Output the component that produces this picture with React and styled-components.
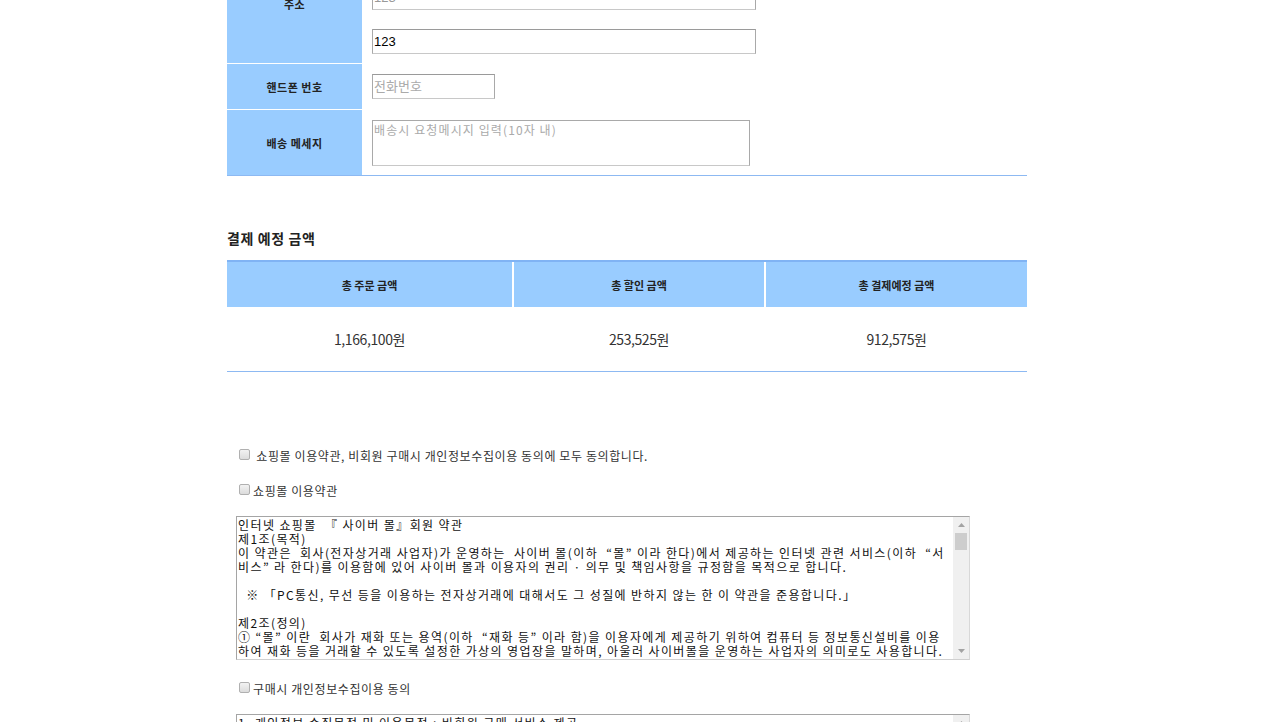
import styled, { createGlobalStyle } from "styled-components";

const GlobalStyle = createGlobalStyle`
  body {
    margin: 0;
    background: #fff;
    font-family: "Noto Sans CJK KR", "Noto Sans", sans-serif;
    color: #222;
  }
`;

const terms1 = [
  "인터넷 쇼핑몰  『 사이버 몰』회원 약관",
  "제1조(목적)",
  "이 약관은  회사(전자상거래 사업자)가 운영하는  사이버 몰(이하  “몰” 이라 한다)에서 제공하는 인터넷 관련 서비스(이하  “서",
  "비스” 라 한다)를 이용함에 있어 사이버 몰과 이용자의 권리 · 의무 및 책임사항을 규정함을 목적으로 합니다.",
  "",
  "  ※ 「PC통신, 무선 등을 이용하는 전자상거래에 대해서도 그 성질에 반하지 않는 한 이 약관을 준용합니다.」",
  "",
  "제2조(정의)",
  "① “몰” 이란  회사가 재화 또는 용역(이하  “재화 등” 이라 함)을 이용자에게 제공하기 위하여 컴퓨터 등 정보통신설비를 이용",
  "하여 재화 등을 거래할 수 있도록 설정한 가상의 영업장을 말하며, 아울러 사이버몰을 운영하는 사업자의 의미로도 사용합니다.",
  "② “이용자” 란 “몰” 에 접속하여 이 약관에 따라 “몰” 이 제공하는 서비스를 받는 회원 및 비회원을 말합니다.",
  "③ ‘회원’ 이라 함은 “몰” 에 회원등록을 한 자로서, 계속적으로 “몰” 이 제공하는 서비스를 이용할 수 있는 자를 말합니다.",
  "④ ‘비회원’ 이라 함은 회원에 가입하지 않고 “몰” 이 제공하는 서비스를 이용하는 자를 말합니다.",
  "",
  "제3조 (약관 등의 명시와 설명 및 개정)",
  "① “몰” 은 이 약관의 내용과 상호 및 대표자 성명, 영업소 소재지 주소(소비자의 불만을 처리할 수 있는 곳의 주소를 포함),",
  "전화번호 · 모사전송번호 · 전자우편주소, 사업자등록번호, 통신판매업 신고번호, 개인정보관리책임자등을 이용자가 쉽게 알 수",
  "있도록 사이버몰의 초기 서비스화면(전면)에 게시합니다.",
  "② “몰” 은 이용자가 약관에 동의하기에 앞서 약관에 정하여져 있는 내용 중 청약철회 · 배송책임 · 환불조건 등과 같은 중요한",
  "내용을 이용자가 이해할 수 있도록 별도의 연결화면 또는 팝업화면 등을 제공하여 이용자의 확인을 구하여야 합니다.",
].join("\n");

const terms2 = [
  "1. 개인정보 수집목적 및 이용목적 : 비회원 구매 서비스 제공",
  "2. 수집하는 개인정보 항목 : 성명, 주소, 전화번호, 이메일, 결제 정보, 비회원 결제 비밀번호",
  "3. 개인정보의 보유기간 및 이용기간",
  "원칙적으로, 개인정보 수집 및 이용목적이 달성된 후에는 해당 정보를 지체 없이 파기합니다.",
  "단, 다음의 정보에 대해서는 아래의 이유로 명시한 기간 동안 보존합니다.",
  "가. 회사 내부 방침에 의한 정보 보유 사유",
  "  - 부정거래 방지 및 쇼핑몰 운영방침에 따른 보관 : 5년",
  "나. 관련 법령에 의한 정보보유 사유",
  "  - 계약 또는 청약철회 등에 관한 기록 : 5년",
  "  - 대금 결제 및 재화 등의 공급에 관한 기록 : 5년",
].join("\n");

function ArrowIcon({ down }) {
  return (
    <svg width="7" height="4" viewBox="0 0 7 4">
      <path d={down ? "M0 0 H7 L3.5 4 Z" : "M0 4 H7 L3.5 0 Z"} fill="#a3a3a3" />
    </svg>
  );
}

function Terms({ text }) {
  return (
    <TermsFrame>
      <TermsText readOnly value={text} />
      <ScrollBar>
        <ScrollButton>
          <ArrowIcon />
        </ScrollButton>
        <Thumb />
        <ScrollFill />
        <ScrollButton>
          <ArrowIcon down />
        </ScrollButton>
      </ScrollBar>
    </TermsFrame>
  );
}

function App() {
  return (
    <Page>
      <GlobalStyle />
      <AddressTable>
        <Label>주소</Label>
        <AddressCell>
          <ZipRow>
            <TextInput $width="120px" defaultValue="12345" />
            <ZipButton type="button">우편번호</ZipButton>
          </ZipRow>
          <TextInput $width="384px" defaultValue="123" $muted />
          <TextInput $width="384px" defaultValue="123" />
        </AddressCell>

        <Label>핸드폰 번호</Label>
        <FieldCell>
          <TextInput $width="123px" placeholder="전화번호" />
        </FieldCell>

        <Label>배송 메세지</Label>
        <FieldCell>
          <MessageBox placeholder="배송시 요청메시지 입력(10자 내)" />
        </FieldCell>
      </AddressTable>

      <SectionTitle>결제 예정 금액</SectionTitle>
      <SummaryTable>
        <HeadCell>총 주문 금액</HeadCell>
        <HeadCell>총 할인 금액</HeadCell>
        <HeadCell>총 결제예정 금액</HeadCell>
        <ValueCell>1,166,100원</ValueCell>
        <ValueCell>253,525원</ValueCell>
        <ValueCell>912,575원</ValueCell>
      </SummaryTable>

      <Agreements>
        <CheckRow $top="74px">
          <Check type="checkbox" />
          <span>&nbsp;쇼핑몰 이용약관, 비회원 구매시 개인정보수집이용 동의에 모두 동의합니다.</span>
        </CheckRow>
        <CheckRow $top="17px">
          <Check type="checkbox" />
          <span>쇼핑몰 이용약관</span>
        </CheckRow>
        <Terms text={terms1} />
        <CheckRow $top="19px">
          <Check type="checkbox" />
          <span>구매시 개인정보수집이용 동의</span>
        </CheckRow>
        <Terms text={terms2} />
      </Agreements>
    </Page>
  );
}

export default App;

const Page = styled.div`
  width: 800px;
  margin: -56px 0 0 227px;
  padding-bottom: 40px;
`;

const AddressTable = styled.div`
  display: grid;
  grid-template-columns: 135px 1fr;
  grid-template-rows: 119px 45px 65px;
  row-gap: 1px;
  border-bottom: 1px solid #8db9f2;
`;

const Label = styled.div`
  display: flex;
  align-items: center;
  justify-content: center;
  background: #99ccff;
  font-size: 11px;
  font-weight: 700;
  letter-spacing: 0.5px;
  color: #222;
`;

const FieldCell = styled.div`
  display: flex;
  align-items: center;
  padding-left: 10px;
`;

const AddressCell = styled.div`
  display: flex;
  flex-direction: column;
  justify-content: flex-end;
  gap: 19px;
  padding: 0 0 9px 10px;
`;

const ZipRow = styled.div`
  display: flex;
  gap: 6px;
  margin-bottom: -11px;
`;

const ZipButton = styled.button`
  height: 25px;
  padding: 0 10px;
  border: 1px solid #aaa;
  background: #f3f3f3;
  font-family: inherit;
  font-size: 12px;
`;

const TextInput = styled.input`
  box-sizing: border-box;
  width: ${(p) => p.$width};
  height: 25px;
  margin: 0;
  padding: 0 1px;
  border: 1px solid #a9a9a9;
  border-top-color: #9a9a9a;
  border-bottom-color: #c8c8c8;
  font-family: "Liberation Sans", "Noto Sans CJK KR", sans-serif;
  font-size: 13px;
  color: ${(p) => (p.$muted ? "#999" : "#000")};
  outline: none;

  &::placeholder {
    color: #aaa;
    font-family: "Noto Sans CJK KR", sans-serif;
  }
`;

const MessageBox = styled.textarea`
  box-sizing: border-box;
  width: 378px;
  height: 46px;
  margin: 0;
  padding: 1px 1px;
  border: 1px solid #a9a9a9;
  border-bottom-color: #c8c8c8;
  resize: none;
  font-family: "Noto Sans CJK KR", sans-serif;
  font-size: 12px;
  line-height: 15px;
  letter-spacing: 1.1px;
  outline: none;

  &::placeholder {
    color: #aaa;
  }
`;

const SectionTitle = styled.h3`
  margin: 52px 0 12px;
  font-size: 14px;
  line-height: 20px;
  font-weight: 700;
  letter-spacing: 0.6px;
  color: #222;
`;

const SummaryTable = styled.div`
  display: grid;
  grid-template-columns: 285px 250px 1fr;
  grid-template-rows: 45px 64px;
  column-gap: 2px;
  border-top: 2px solid #80b3f4;
  border-bottom: 1px solid #8db9f2;
`;

const HeadCell = styled.div`
  display: flex;
  align-items: center;
  justify-content: center;
  background: #99ccff;
  font-size: 11px;
  font-weight: 700;
  color: #222;
`;

const ValueCell = styled.div`
  display: flex;
  align-items: center;
  justify-content: center;
  font-size: 14px;
  letter-spacing: -0.4px;
  color: #333;
`;

const Agreements = styled.div`
  display: flex;
  flex-direction: column;
  align-items: flex-start;
  padding-left: 9px;
`;

const CheckRow = styled.label`
  display: flex;
  align-items: center;
  gap: 3px;
  height: 18px;
  margin: ${(p) => p.$top} 0 0 3px;
  font-size: 12px;
  letter-spacing: 0.6px;
  color: #333;
`;

const Check = styled.input`
  appearance: none;
  width: 11px;
  height: 11px;
  margin: 0 0 1px;
  border: 1px solid #b0b0b0;
  border-radius: 2px;
  background: linear-gradient(#f2f2f2, #dcdcdc);
`;

const TermsFrame = styled.div`
  box-sizing: border-box;
  display: flex;
  width: 734px;
  height: 144px;
  margin-top: 17px;
  border: 1px solid #a5a5a5;
  border-right-color: #d8d8d8;
  border-bottom-color: #d0d0d0;
`;

const TermsText = styled.textarea`
  flex: 1;
  min-width: 0;
  margin: 0;
  padding: 1px 1px;
  border: none;
  resize: none;
  white-space: pre;
  overflow: hidden;
  font-family: "Noto Sans CJK KR", sans-serif;
  font-size: 12px;
  line-height: 14px;
  letter-spacing: 1.4px;
  color: #111;
  outline: none;
`;

const ScrollBar = styled.div`
  display: flex;
  flex-direction: column;
  align-items: center;
  width: 16px;
  background: #f0f0f0;
`;

const ScrollButton = styled.div`
  display: flex;
  align-items: center;
  justify-content: center;
  width: 100%;
  height: 16px;
`;

const Thumb = styled.div`
  width: 12px;
  height: 17px;
  background: #cdcdcd;
`;

const ScrollFill = styled.div`
  flex: 1;
`;
